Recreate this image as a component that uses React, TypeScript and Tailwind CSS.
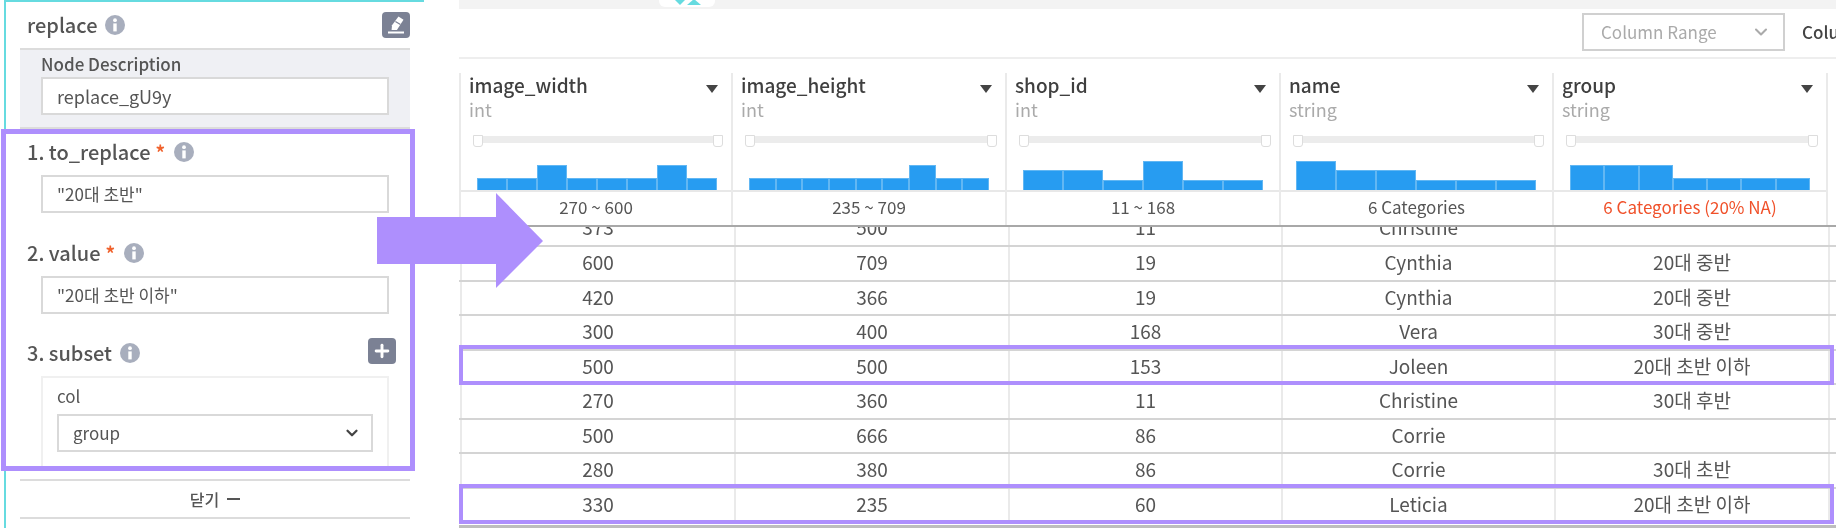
import { ChevronDown, Plus } from "lucide-react";

const font = "[font-family:'Noto_Sans_CJK_KR','Noto_Sans',sans-serif]";

const InfoIcon = ({ className }: { className?: string }) => (
  <svg viewBox="0 0 20 20" className={className}>
    <circle cx="10" cy="10" r="10" fill="#a8aebd" />
    <circle cx="10" cy="5.2" r="1.9" fill="#fff" />
    <rect x="8.3" y="8.4" width="3.4" height="8" fill="#fff" />
  </svg>
);

const EditIcon = () => (
  <svg viewBox="0 0 28 26" className="w-[28px] h-[26px]">
    <rect width="28" height="26" rx="4" fill="#7b8194" />
    <path d="M16.5 4.5l5 3.2-6.6 10.3H9.6l.4-4.8z" fill="#fff" />
    <path d="M13.4 9.4l5 3.2" stroke="#7b8194" strokeWidth="1.2" />
    <rect x="6" y="19.5" width="16" height="2" fill="#fff" />
  </svg>
);

const TextBox = ({ value, className }: { value: string; className?: string }) => (
  <div className={`h-[38px] border-2 border-[#d9d9d9] bg-white pl-[14px] flex items-center text-[#555] ${className ?? "text-[17px]"}`}>
    {value}
  </div>
);

const Required = () => <span className="text-[#f0622d] ml-[5px] text-[19px] font-bold">*</span>;

const Panel = () => (
  <div className="w-[459px] h-[528px] pl-1 shrink-0">
    <div className="w-[420px] h-full border-l-2 border-t-2 border-[#66dbe0] pl-[14px] text-[#555]">
      <div className="w-[390px]">
        <div className="h-[46px] flex items-center justify-between pl-[7px]">
          <div className="flex items-center gap-2 text-[20px] font-medium">
            replace <InfoIcon className="w-[20px] h-[20px]" />
          </div>
          <EditIcon />
        </div>
        <div className="h-[81px] bg-[#eff0f4] border-y-2 border-[#dcdcdc] px-[21px] pt-[3px]">
          <div className="text-[17px] font-medium leading-[22px] h-[24px]">Node Description</div>
          <TextBox value="replace_gU9y" className="text-[18px]" />
        </div>
        <div className="h-[46px] flex items-center pl-[7px] text-[20px] font-medium">
          1. to_replace <Required />
          <InfoIcon className="w-[20px] h-[20px] ml-[9px]" />
        </div>
        <div className="px-[21px]"><TextBox value={'"20대 초반"'} /></div>
        <div className="mt-[17px] h-[46px] flex items-center pl-[7px] text-[20px] font-medium">
          2. value <Required />
          <InfoIcon className="w-[20px] h-[20px] ml-[9px]" />
        </div>
        <div className="px-[21px]"><TextBox value={'"20대 초반 이하"'} /></div>
        <div className="mt-[16px] h-[46px] flex items-start pt-[8px] justify-between pl-[7px] pr-[14px] text-[20px] font-medium">
          <div className="flex items-center gap-2">
            3. subset <InfoIcon className="w-[20px] h-[20px]" />
          </div>
          <div className="w-[28px] h-[26px] rounded bg-[#7b8194] flex items-center justify-center">
            <Plus size={20} strokeWidth={3.5} color="#fff" />
          </div>
        </div>
        <div className="mx-[21px] h-[90px] border-2 border-b-0 border-[#f0f0f0] px-[14px]">
          <div className="h-[36px] flex items-center text-[17px]">col</div>
          <div className="h-[38px] border-2 border-[#d9d9d9] pl-[14px] pr-[10px] flex items-center justify-between text-[17px]">
            group <ChevronDown size={18} strokeWidth={3} color="#444" />
          </div>
        </div>
        <div className="mt-[13px] h-[40px] border-y-2 border-[#dcdcdc] flex items-center justify-center gap-2 text-[16px] font-medium">
          닫기 <span className="w-[13px] h-[2px] bg-[#555]" />
        </div>
      </div>
    </div>
  </div>
);

type Column = {
  name: string;
  type: string;
  stat: string;
  bars: number[];
  start: number;
  statClass?: string;
};

const columns: Column[] = [
  { name: "image_width", type: "int", stat: "270 ~ 600", start: 16, bars: [12, 12, 25, 12, 12, 12, 25, 12] },
  { name: "image_height", type: "int", stat: "235 ~ 709", start: 16, bars: [12, 12, 12, 12, 12, 12, 25, 12, 12] },
  { name: "shop_id", type: "int", stat: "11 ~ 168", start: 16, bars: [20, 20, 10, 29, 10, 10] },
  { name: "name", type: "string", stat: "6 Categories", start: 15, bars: [29, 20, 20, 10, 10, 10] },
  { name: "group", type: "string", stat: "6 Categories (20% NA)", start: 16, statClass: "text-[#f0512a]", bars: [25, 25, 25, 12, 12, 12, 12] },
];

const rows = [
  ["373", "500", "11", "Christine", ""],
  ["600", "709", "19", "Cynthia", "20대 중반"],
  ["420", "366", "19", "Cynthia", "20대 중반"],
  ["300", "400", "168", "Vera", "30대 중반"],
  ["500", "500", "153", "Joleen", "20대 초반 이하"],
  ["270", "360", "11", "Christine", "30대 후반"],
  ["500", "666", "86", "Corrie", ""],
  ["280", "380", "86", "Corrie", "30대 초반"],
  ["330", "235", "60", "Leticia", "20대 초반 이하"],
];

const Header = ({ col }: { col: Column }) => (
  <div className="border-l-2 border-[#eaeaea] h-[152px] flex flex-col">
    <div className="flex justify-between pl-[8px] pr-[13px] h-[63px]">
      <div>
        <div className="text-[19px] font-medium leading-[26px] -mt-[1px] text-[#3f3f3f]">{col.name}</div>
        <div className="text-[18px] leading-[22px] text-[#aaa]">{col.type}</div>
      </div>
      <div className="mt-[12px] w-0 h-0 border-x-[6px] border-x-transparent border-t-[8px] border-t-[#444]" />
    </div>
    <div className="relative ml-[12px] mr-[8px] h-[7px] bg-[#ececec]">
      <div className="absolute left-0 -top-[1px] w-[10px] h-[12px] bg-white border border-[#ddd] rounded-b-[3px]" />
      <div className="absolute right-0 -top-[1px] w-[10px] h-[12px] bg-white border border-[#ddd] rounded-b-[3px]" />
    </div>
    <div className="flex-1 flex items-end" style={{ paddingLeft: col.start }}>
      {col.bars.map((h, i) => (
        <div
          key={i}
          className="flex-none bg-[#279cf1] border-x border-t border-[#62b7f3]"
          style={{ height: h, width: 240 / col.bars.length }}
        />
      ))}
    </div>
    <div className="h-[2px] bg-[#e8e8e8]" />
    <div className={`h-[33px] pb-[3px] flex items-center justify-center text-[17px] ${col.statClass ?? "text-[#555]"}`}>
      {col.stat}
    </div>
  </div>
);

const Table = () => (
  <div className="flex-1 min-w-0 overflow-hidden">
    <div className="h-[9px] bg-[#f3f3f3] relative">
      <div className="absolute left-[200px] top-0 w-[56px] h-[7px] bg-white rounded-b-[6px] overflow-hidden">
        <div className="absolute left-[16px] top-0 w-0 h-0 border-x-[5px] border-x-transparent border-t-[5px] border-t-[#66dbe0]" />
        <div className="absolute left-[28px] -top-[1px] w-0 h-0 border-x-[7px] border-x-transparent border-b-[6px] border-b-[#66dbe0]" />
      </div>
    </div>
    <div className="h-[50px] border-b-2 border-[#eeeeee] flex items-start pl-[1123px] pt-[4px] gap-[17px]">
      <div className="w-[203px] h-[38px] border-2 border-[#d0d0d0] flex items-center justify-between pl-[17px] pr-[12px] text-[17px] text-[#aaa] shrink-0">
        Column Range <ChevronDown size={20} strokeWidth={2.5} color="#aaa" />
      </div>
      <div className="text-[17px] font-medium leading-[38px] text-[#444] whitespace-nowrap">Column</div>
    </div>
    <div className="mt-[14px] grid grid-cols-[272px_274px_274px_273px_274px_1fr]">
      {columns.map((c) => (
        <Header key={c.name} col={c} />
      ))}
      <div className="border-l-2 border-[#eaeaea]" />
    </div>
    <div className="h-[2px] bg-[#a8a8a8]" />
    <div className="relative h-[18px] overflow-hidden">
      <div className="absolute bottom-0 left-0 right-0 grid grid-cols-[274px_274px_273px_273px_274px_1fr] pl-[1px] text-[19px] text-[#555] h-[34px]">
        {rows[0].map((v, i) => (
          <div key={i} className="border-l-2 border-[#eaeaea] flex items-center justify-center pb-[2px]">{v}</div>
        ))}
        <div className="border-l-2 border-[#eaeaea]" />
      </div>
    </div>
    {rows.slice(1).map((r, idx) => (
      <div
        key={idx}
        className="grid grid-cols-[274px_274px_273px_273px_274px_1fr] pl-[1px] h-[34.5px] border-t-2 border-[#d4d4d4] text-[19px] text-[#555]"
      >
        {r.map((v, i) => (
          <div key={i} className="border-l-2 border-[#eaeaea] flex items-center justify-center pb-[2px]">{v}</div>
        ))}
        <div className="border-l-2 border-[#eaeaea]" />
      </div>
    ))}
    <div className="h-[3px] bg-[#bdbdbd] mt-[4px]" />
  </div>
);

export default function App() {
  return (
    <div className={`relative w-[1836px] h-[528px] bg-white overflow-hidden flex blur-[0.4px] ${font}`}>
      <Panel />
      <Table />
      {/* purple call-outs laid over the screenshot */}
      <div className="absolute left-[1px] top-[129px] w-[414px] h-[342px] border-[5px] border-[#ae8ffd]" />
      <div className="absolute left-[459px] top-[345px] w-[1375px] h-[40px] border-[4px] border-[#ae8ffd]" />
      <div className="absolute left-[459px] top-[484px] w-[1375px] h-[40px] border-[4px] border-[#ae8ffd]" />
      <svg className="absolute left-[377px] top-[193px]" width="166" height="95" viewBox="0 0 166 95">
        <polygon points="0,24 119,24 119,0 166,48 119,95 119,71 0,71" fill="#ae8ffd" />
      </svg>
    </div>
  );
}
